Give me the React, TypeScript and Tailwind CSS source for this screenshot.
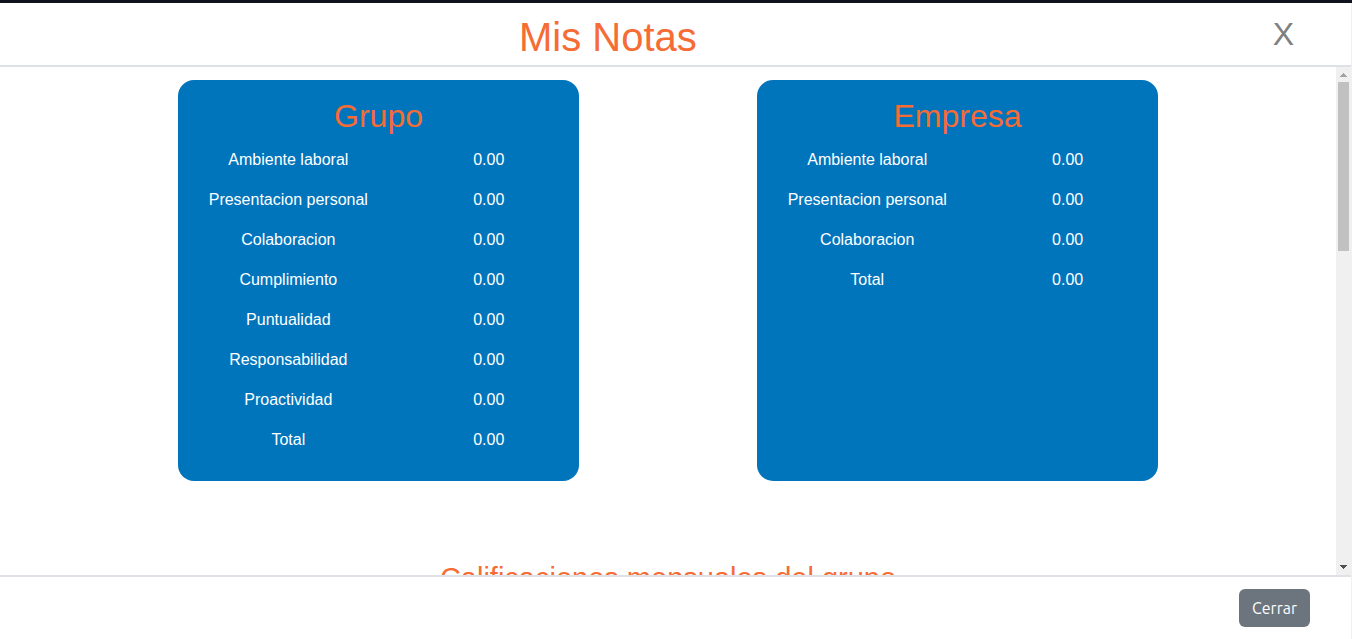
type Grade = { label: string; value: string };

const grupo: Grade[] = [
  { label: 'Ambiente laboral', value: '0.00' },
  { label: 'Presentacion personal', value: '0.00' },
  { label: 'Colaboracion', value: '0.00' },
  { label: 'Cumplimiento', value: '0.00' },
  { label: 'Puntualidad', value: '0.00' },
  { label: 'Responsabilidad', value: '0.00' },
  { label: 'Proactividad', value: '0.00' },
  { label: 'Total', value: '0.00' },
];

const empresa: Grade[] = [
  { label: 'Ambiente laboral', value: '0.00' },
  { label: 'Presentacion personal', value: '0.00' },
  { label: 'Colaboracion', value: '0.00' },
  { label: 'Total', value: '0.00' },
];

function GradeCard({ title, grades }: { title: string; grades: Grade[] }) {
  return (
    <section className="aspect-square w-[30%] rounded-2xl bg-[#0075bc] pt-4">
      <h2 className="mb-1 text-center text-[32px] leading-10 text-[#f56c35]">{title}</h2>
      <table className="w-full table-fixed text-center text-base text-white">
        <tbody>
          {grades.map((grade) => (
            <tr key={grade.label} className="h-10">
              <th scope="row" className="p-0 pl-5 text-center font-normal whitespace-nowrap">
                {grade.label}
              </th>
              <td className="p-0 pl-5">{grade.value}</td>
            </tr>
          ))}
        </tbody>
      </table>
    </section>
  );
}

function ScrollTrack() {
  return (
    <div aria-hidden="true" className="flex w-[15px] shrink-0 flex-col items-center bg-[#f0f0f0]">
      <svg className="h-[15px] w-[15px] shrink-0" viewBox="0 0 15 15" shapeRendering="crispEdges">
        <path d="M7 6h1v1h1v1h1v1h1v1H4V9h1V8h1V7h1z" fill="#a3a3a3" />
      </svg>
      <div className="w-[11px] grow-[169] bg-[#c1c1c1]" />
      <div className="grow-[309]" />
      <svg className="h-[15px] w-[15px] shrink-0" viewBox="0 0 15 15" shapeRendering="crispEdges">
        <path d="M4 5h7v1h-1v1H9v1H8v1H7V8H6V7H5V6H4z" fill="#505050" />
      </svg>
    </div>
  );
}

export default function App() {
  return (
    <div className="flex h-screen flex-col border-t-3 border-[#12121f] bg-white font-['Liberation_Sans',Arial,sans-serif]">
      <div className="flex min-h-0 flex-1 flex-col border-r border-[#f0f0f0]">
        <header className="flex h-16 shrink-0 items-center border-b-2 border-[#dee2e6]">
          <h1 className="w-9/10 pt-1.5 text-center text-[40px] leading-12 text-[#f56c35]">Mis Notas</h1>
          <div className="flex flex-1 justify-center">
            <button type="button" className="text-[32px] leading-12 text-[#808080]">
              X
            </button>
          </div>
        </header>

        <div className="flex min-h-0 flex-1">
          <main className="min-w-0 flex-1 overflow-y-auto [scrollbar-width:none]">
            <div className="flex items-start justify-evenly pt-[13px]">
              <GradeCard title="Grupo" grades={grupo} />
              <GradeCard title="Empresa" grades={empresa} />
            </div>
            <h2 className="mt-20 text-center text-[29px] leading-[34px] text-[#f56c35]">
              Calificaciones mensuales del grupo
            </h2>
          </main>
          <ScrollTrack />
        </div>

        <footer className="flex h-16 shrink-0 items-center justify-end border-t-2 border-[#dee2e6] pr-[41px]">
          <button
            type="button"
            className="rounded-md bg-[#6c757d] px-[13px] py-[7px] font-[Ubuntu,Roboto,sans-serif] text-base leading-6 text-white"
          >
            Cerrar
          </button>
        </footer>
      </div>
    </div>
  );
}
